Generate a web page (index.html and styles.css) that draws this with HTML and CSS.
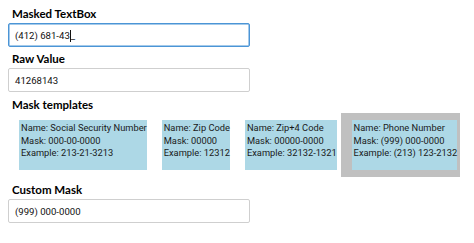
FILE: index.html
```html
<!DOCTYPE html>
<html lang="en">
<head>
    <meta charset="UTF-8">
    <meta name="viewport" content="width=device-width, initial-scale=1.0">
    <title>Masked TextBox</title>
    <link rel="stylesheet" href="styles.css">
</head>
<body>
    <div class="page">
        <div class="field-label">Masked TextBox</div>
        <div class="text-box focused"><span>(412) 681-43</span><span class="caret"></span><span>_</span></div>

        <div class="field-label">Raw Value</div>
        <div class="text-box">41268143</div>

        <div class="field-label list-label">Mask templates</div>
        <div class="template-list">
            <div class="template-item">
                <div class="template-card">Name: Social Security Number<br>Mask: 000-00-0000<br>Example: 213-21-3213</div>
            </div>
            <div class="template-item">
                <div class="template-card">Name: Zip Code<br>Mask: 00000<br>Example: 12312</div>
            </div>
            <div class="template-item">
                <div class="template-card">Name: Zip+4 Code<br>Mask: 00000-0000<br>Example: 32132-1321</div>
            </div>
            <div class="template-item selected">
                <div class="template-card">Name: Phone Number<br>Mask: (999) 000-0000<br>Example: (213) 123-2132</div>
            </div>
        </div>

        <div class="field-label after-list">Custom Mask</div>
        <div class="text-box">(999) 000-0000</div>
    </div>
</body>
</html>
```

FILE: styles.css
```css
body {
    margin: 0;
    background-color: #fff;
    font-family: Roboto, sans-serif;
    color: #111;
}
.page {
    padding: 6px 0 0 8px;
}
.field-label {
    font-family: Lato, sans-serif;
    font-size: 11.5px;
    font-weight: 700;
    line-height: 16px;
    padding-left: 4px;
    margin-top: 4px;
    margin-bottom: 1px;
    color: #000;
}
.field-label:first-child {
    margin-top: 0;
}
.field-label.list-label {
    margin-top: 5px;
    margin-bottom: 0;
}
.field-label.after-list {
    margin-top: 5px;
}
.text-box {
    width: 242px;
    height: 24px;
    box-sizing: border-box;
    border: 1px solid #cfcfcf;
    border-radius: 2px;
    padding-left: 6px;
    display: flex;
    align-items: center;
    font-size: 9.6px;
}
.text-box.focused {
    border-color: #4b95d6;
    box-shadow: inset 0 0 0 0.5px #4b95d6;
}
.caret {
    display: inline-block;
    width: 1px;
    height: 12px;
    background-color: #111;
    margin-top: 1px;
}
.template-list {
    display: flex;
    gap: 1px;
}
.template-item {
    padding: 7px 3px 7px 11px;
}
.template-item.selected {
    background-color: #c0c0c0;
}
.template-card {
    background-color: #add8e6;
    height: 50px;
    box-sizing: border-box;
    padding: 2px 0 0 2px;
    font-size: 9.3px;
    line-height: 12.7px;
    white-space: nowrap;
    color: #1a1a1a;
}
```
